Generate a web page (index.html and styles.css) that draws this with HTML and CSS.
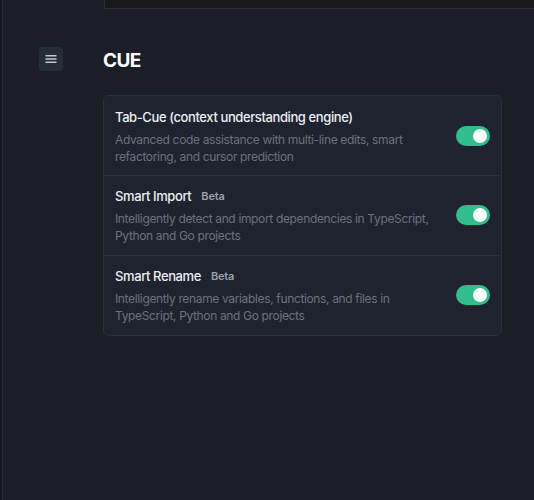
FILE: index.html
```html
<!DOCTYPE html>
<html lang="en">
<head>
<meta charset="utf-8">
<title>CUE settings</title>
<link rel="stylesheet" href="styles.css">
</head>
<body>
<div class="app">
  <div class="top-panel"></div>
  <div class="layout">
    <aside class="side">
      <button class="menu-btn" aria-label="Menu">
        <svg width="12" height="10" viewBox="0 0 12 10" aria-hidden="true">
          <path d="M1 1.7h10M1 5h10M1 8.3h10" stroke="#c3c7d0" stroke-width="1.4" stroke-linecap="round" fill="none"/>
        </svg>
      </button>
    </aside>
    <main class="main">
      <h1 class="heading">CUE</h1>
      <section class="card">
        <div class="row">
          <div class="info">
            <div class="title-line"><span class="title">Tab-Cue (context understanding engine)</span></div>
            <p class="desc">Advanced code assistance with multi-line edits, smart refactoring, and cursor prediction</p>
          </div>
          <span class="toggle on"><span class="knob"></span></span>
        </div>
        <div class="row row-beta">
          <div class="info">
            <div class="title-line"><span class="title">Smart Import</span><span class="badge">Beta</span></div>
            <p class="desc">Intelligently detect and import dependencies in TypeScript, Python and Go projects</p>
          </div>
          <span class="toggle on"><span class="knob"></span></span>
        </div>
        <div class="row row-beta">
          <div class="info">
            <div class="title-line"><span class="title">Smart Rename</span><span class="badge">Beta</span></div>
            <p class="desc">Intelligently rename variables, functions, and files in TypeScript, Python and Go projects</p>
          </div>
          <span class="toggle on"><span class="knob"></span></span>
        </div>
      </section>
    </main>
  </div>
</div>
</body>
</html>
```
FILE: styles.css
```css
* { box-sizing: border-box; }
html, body { margin: 0; padding: 0; height: 100%; }
body {
  background: #15171d;
  font-family: Inter, "Noto Sans", "Liberation Sans", sans-serif;
  color: #e5e7eb;
  padding-left: 2px;
}
.app {
  min-height: 100%;
  background: #1b1e27;
  border-left: 1px solid #252933;
}
.top-panel {
  margin-left: 101px;
  height: 9px;
  background: #19191b;
  border-left: 1px solid #2b2e35;
  border-bottom: 1px solid #2b2e35;
}
.layout {
  display: flex;
}
.side {
  width: 100px;
  padding-left: 36px;
  padding-top: 38px;
}
.menu-btn {
  width: 24px;
  height: 24px;
  border: 0;
  padding: 0;
  border-radius: 4px;
  background: #272c39;
  display: flex;
  align-items: center;
  justify-content: center;
}
.main {
  width: 399px;
  padding-top: 40px;
}
.heading {
  margin: 0 0 22px;
  font-size: 19px;
  line-height: 24px;
  font-weight: 700;
  letter-spacing: -0.6px;
  color: #ffffff;
}
.card {
  background: #1f2330;
  border: 1px solid #2a2f3b;
  border-radius: 6px;
}
.row {
  display: flex;
  align-items: center;
  gap: 16px;
  height: 79px;
  padding: 11px 11px 11px;
}
.row + .row { border-top: 1px solid #2a2f3b; height: 80px; }
.row-beta { padding-top: 9px; }
.info { flex: 1; min-width: 0; align-self: flex-start; }
.title-line {
  display: flex;
  align-items: baseline;
  gap: 10px;
  height: 20px;
}
.row-beta .title-line { height: 22px; align-items: center; }
.title {
  font-size: 13px;
  line-height: 20px;
  font-weight: 500;
  letter-spacing: -0.4px;
  color: #eceef2;
}
.badge {
  font-size: 11px;
  line-height: 16px;
  font-weight: 600;
  letter-spacing: -0.2px;
  color: #9ca1ac;
}
.desc {
  margin: 5px 0 0;
  font-size: 12px;
  line-height: 16.5px;
  letter-spacing: -0.35px;
  color: #6c717d;
}
.row-beta .desc { margin-top: 4px; }
.toggle {
  flex: none;
  width: 34px;
  height: 20px;
  border-radius: 10px;
  background: #2fbe8c;
  position: relative;
}
.knob {
  position: absolute;
  top: 3px;
  right: 3px;
  width: 14px;
  height: 14px;
  border-radius: 50%;
  background: #ffffff;
}
```
